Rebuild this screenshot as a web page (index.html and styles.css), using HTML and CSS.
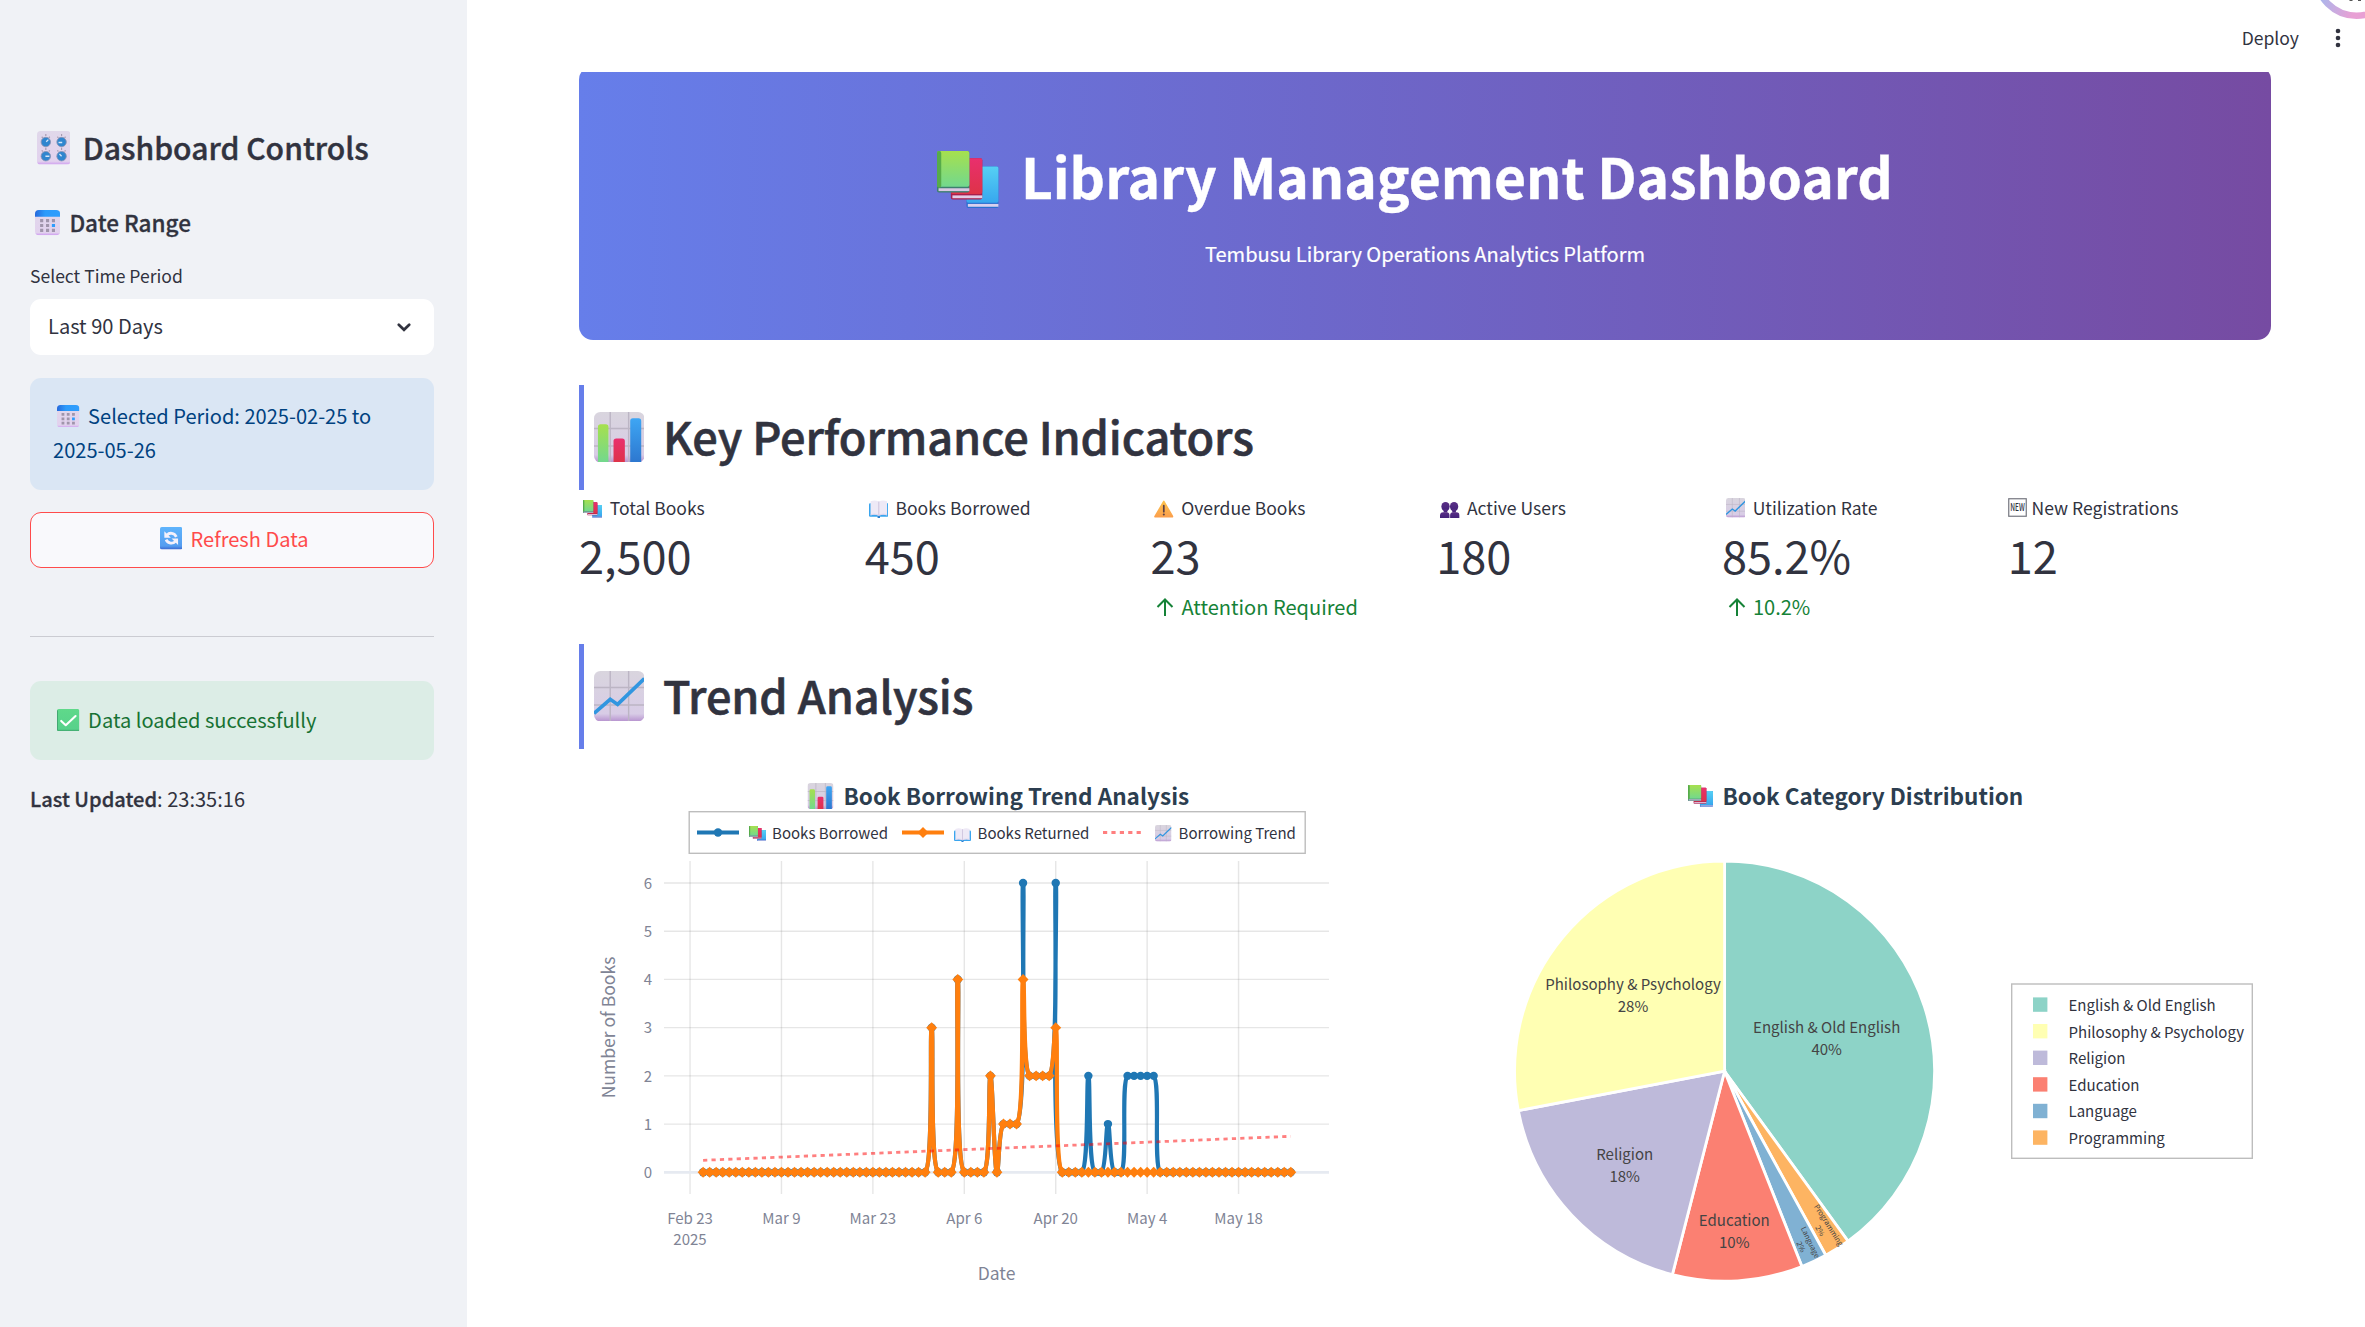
FILE: index.html
```html
<!DOCTYPE html>
<html lang="en">
<head>
<meta charset="utf-8">
<title>Library Management Dashboard</title>
<link rel="stylesheet" href="styles.css">
</head>
<body>
<svg class="defs" width="0" height="0" aria-hidden="true">
  <defs>
    <linearGradient id="g-tile" x1="0" y1="0" x2="0" y2="1"><stop offset="0" stop-color="#d9d5de"/><stop offset=".85" stop-color="#d8cce6"/><stop offset="1" stop-color="#b793cf"/></linearGradient>
    <linearGradient id="g-green" x1="0" y1="0" x2="0" y2="1"><stop offset="0" stop-color="#a6e04e"/><stop offset="1" stop-color="#72d88e"/></linearGradient>
    <linearGradient id="g-red" x1="0" y1="0" x2="0" y2="1"><stop offset="0" stop-color="#e92f6e"/><stop offset="1" stop-color="#de3348"/></linearGradient>
    <linearGradient id="g-sky" x1="0" y1="0" x2="0" y2="1"><stop offset="0" stop-color="#56d0f4"/><stop offset="1" stop-color="#37a7ee"/></linearGradient>
    <linearGradient id="g-blue" x1="0" y1="0" x2="0" y2="1"><stop offset="0" stop-color="#3ea6f4"/><stop offset="1" stop-color="#2d77cf"/></linearGradient>
    <linearGradient id="g-cal" x1="0" y1="0" x2="1" y2="0"><stop offset="0" stop-color="#2569dc"/><stop offset=".4" stop-color="#2b9bfb"/><stop offset="1" stop-color="#2f9dfd"/></linearGradient>
    <linearGradient id="g-page" x1="0" y1="0" x2="0" y2="1"><stop offset="0" stop-color="#e0d8ea"/><stop offset=".9" stop-color="#e2d2ee"/><stop offset="1" stop-color="#cf9df0"/></linearGradient>
    <linearGradient id="g-refresh" x1="0" y1="0" x2="0" y2="1"><stop offset="0" stop-color="#5fb4fc"/><stop offset=".85" stop-color="#559df0"/><stop offset="1" stop-color="#3a67cf"/></linearGradient>
    <linearGradient id="g-check" x1="0" y1="0" x2="0" y2="1"><stop offset="0" stop-color="#5fd98a"/><stop offset=".9" stop-color="#57d18b"/><stop offset="1" stop-color="#3a9c66"/></linearGradient>
    <linearGradient id="g-warn" x1="0" y1="0" x2="0" y2="1"><stop offset="0" stop-color="#fdc24c"/><stop offset="1" stop-color="#fba04c"/></linearGradient>
    <linearGradient id="g-user" x1="0" y1="0" x2="0" y2="1"><stop offset="0" stop-color="#5a2f86"/><stop offset="1" stop-color="#43217a"/></linearGradient>
    <linearGradient id="g-ring" gradientUnits="userSpaceOnUse" x1="4" y1="0" x2="38" y2="14"><stop offset="0" stop-color="#a9b6ec"/><stop offset="1" stop-color="#e8a0d4"/></linearGradient>

    <symbol id="i-knobs" viewBox="0 0 32 32">
      <rect width="32" height="32" rx="3.5" fill="url(#g-page)"/>
      <g fill="none" stroke="#a79bb0" stroke-width="1.1">
        <path d="M4.500 5.500l1 1M8.400 2.800v2M12.200 5.500l-1 1M19.400 5.500l1 1M23.400 2.800v2M27.200 5.500l-1 1M4.500 18.500l1 1M8.400 16v2M12.200 18.500l-1 1M19.400 18.500l1 1M23.400 16v2M27.200 18.500l-1 1"/>
      </g>
      <g fill="#2f86cf" stroke="#8a93b4" stroke-width=".8"><circle cx="8.400" cy="10.500" r="4.500"/><circle cx="23.400" cy="10.500" r="4.500"/><circle cx="8.400" cy="24" r="4.500"/><circle cx="23.400" cy="24" r="4.500"/></g>
      <path d="M8.800 10.200l2-2M20.500 11h3.500M8 24h3.800M23.400 24l-2-2" stroke="#d5e6f8" stroke-width="1.300" fill="none"/>
    </symbol>
    <symbol id="i-calendar" viewBox="0 0 32 32">
      <rect width="32" height="32" rx="5" fill="url(#g-page)"/>
      <path d="M0 8.500V5a5 5 0 0 1 5-5h22a5 5 0 0 1 5 5v3.500z" fill="url(#g-cal)"/>
      <g fill="#a095ab"><path d="M6.500 11.500h4v4h-4zM14 11.500h4v4h-4zM21.500 11.500h4v4h-4zM6.500 17.800h4v4h-4zM14 17.800h4v4h-4zM6.500 24h4v4h-4zM14 24h4v4h-4zM21.500 24h4v4h-4z"/></g>
      <path d="M21.500 17.800h4v4h-4z" fill="#2f9dfd"/>
    </symbol>
    <symbol id="i-refresh" viewBox="0 0 32 32">
      <rect width="32" height="32" rx="2.500" fill="url(#g-refresh)"/>
      <path d="M10 11.500C13.500 7.500 20.500 8 23.300 14M22 20.500C18.500 24.500 11.500 24 8.700 18" fill="none" stroke="#f4f1fb" stroke-width="4"/>
      <path d="M6.200 6.200v9.300h9.300zM25.800 25.800v-9.300h-9.300z" fill="#f4f1fb"/>
    </symbol>
    <symbol id="i-check" viewBox="0 0 32 32">
      <rect width="32" height="32" rx="2.500" fill="url(#g-check)"/>
      <path d="M.7 2v28" stroke="#43a572" stroke-width="1.400"/>
      <path d="M6 17l6.500 6.200L26.500 10" fill="none" stroke="#fff" stroke-width="3" stroke-linecap="round" stroke-linejoin="round"/>
    </symbol>
    <symbol id="i-books" viewBox="0 0 32 28" preserveAspectRatio="none">
      <rect x="15.300" y="7.600" width="16.700" height="20.400" rx="1" fill="#2b6fd0"/><rect x="15.300" y="7.600" width="16.700" height="17.800" rx="1" fill="url(#g-sky)"/><rect x="16" y="26" width="16" height="1.400" fill="#d9d0ee"/>
      <rect x="7.200" y="3.500" width="16.300" height="20.300" rx="1" fill="#a81f4e"/><rect x="7.200" y="3.500" width="16.300" height="17.600" rx="1" fill="url(#g-red)"/><rect x="8" y="21.800" width="15.500" height="1.400" fill="#e2cce6"/>
      <rect width="16.800" height="20.400" rx="1" fill="#3d7f70"/><rect width="16.800" height="17.600" rx="1" fill="url(#g-green)"/><rect width="2.200" height="18" rx="1" fill="#56ab4a"/><rect x=".8" y="18.300" width="16" height="1.400" fill="#d9c8e2"/>
    </symbol>
    <symbol id="i-openbook" viewBox="0 0 32 28" preserveAspectRatio="none">
      <rect y="5" width="32" height="21" rx="2" fill="#3aa5ee"/><path d="M14 25h4v3h-4z" fill="#2b7fd0"/>
      <path d="M2.500 2Q9.500-.8 16 2.500V24.500Q9 22 2.500 24zM29.500 2Q22.500-.8 16 2.500V24.500Q23 22 29.500 24z" fill="#eee9f6"/>
      <path d="M16 2.500v22" stroke="#c5b9d6" stroke-width="1.300"/><path d="M2.500 22.700Q9 21 16 23.300Q23 21 29.500 22.700" fill="none" stroke="#d6c8e6"/>
    </symbol>
    <symbol id="i-bars" viewBox="0 0 32 32">
      <rect width="32" height="32" rx="4" fill="url(#g-tile)"/>
      <path d="M10.300 0v32M22 0v32M0 10.500h32M0 21.600h32" stroke="#bcb5c4" stroke-width=".9"/>
      <path d="M2.500 32V9.500a1.700 1.700 0 0 1 1.700-1.700H7.500a1.700 1.700 0 0 1 1.700 1.700V32z" fill="url(#g-green)"/>
      <path d="M12.400 32V18.500a1.700 1.700 0 0 1 1.700-1.700h3.800a1.700 1.700 0 0 1 1.700 1.700V32z" fill="url(#g-red)"/>
      <path d="M23 32V5.700A1.700 1.700 0 0 1 24.700 4h3.600A1.700 1.700 0 0 1 30 5.700V32z" fill="url(#g-blue)"/>
    </symbol>
    <symbol id="i-trend" viewBox="0 0 32 32">
      <rect width="32" height="32" rx="4" fill="url(#g-tile)"/>
      <path d="M10.300 0v32M22 0v32M0 10.500h32M0 21.600h32" stroke="#bcb5c4" stroke-width=".9"/>
      <path d="M0 27L10.300 18L15 21.200L32 4.800" fill="none" stroke="#3196e0" stroke-width="2.300"/>
    </symbol>
    <symbol id="i-warning" viewBox="0 0 32 28">
      <path d="M16 1.500L30.500 26.500H1.500z" fill="url(#g-warn)" stroke="url(#g-warn)" stroke-width="2.500" stroke-linejoin="round"/>
      <path d="M16 8.500v10" stroke="#5b3f45" stroke-width="2.800" stroke-linecap="round"/><circle cx="16" cy="23" r="1.700" fill="#5b3f45"/>
    </symbol>
    <symbol id="i-users" viewBox="0 0 32 26" preserveAspectRatio="none">
      <g fill="url(#g-user)"><ellipse cx="9" cy="7.500" rx="6.800" ry="7.500"/><ellipse cx="23" cy="7.500" rx="6.800" ry="7.500"/><path d="M6 12h6v5H6zM20 12h6v5h-6z"/><path d="M0 26v-4q0-5.500 5.500-5.500h5q5 0 5 5V26zM16.500 26v-4.500q0-5 5-5h5q5.500 0 5.500 5.500v4z"/></g>
    </symbol>
    <symbol id="i-new" viewBox="0 0 19 19">
      <rect x=".75" y=".75" width="17.500" height="17.500" fill="#fff" stroke="#74767f" stroke-width="1.200"/>
      <text x="9.500" y="13" text-anchor="middle" font-size="9.800" font-weight="500" fill="#31333f" textLength="14.500" lengthAdjust="spacingAndGlyphs">NEW</text>
    </symbol>
    <symbol id="i-up" viewBox="0 0 18 18"><path d="M9 18V1.500M1.500 9L9 1.500L16.500 9" fill="none" stroke="currentColor" stroke-width="2"/></symbol>
  </defs>
</svg>

<div class="app">
  <aside class="sidebar">
    <h2 class="sidebar-title"><svg class="emoji"><use href="#i-knobs"/></svg> Dashboard Controls</h2>
    <h3 class="sidebar-subtitle"><svg class="emoji"><use href="#i-calendar"/></svg> Date Range</h3>
    <label class="field-label">Select Time Period</label>
    <div class="select"><span>Last 90 Days</span>
      <svg class="chevron" viewBox="0 0 14 9"><path d="M1.800 1.800L7 6.800L12.200 1.800" fill="none" stroke="#31333f" stroke-width="2.700" stroke-linecap="round"/></svg>
    </div>
    <div class="alert alert-info"><svg class="emoji"><use href="#i-calendar"/></svg> Selected Period: 2025-02-25 to 2025-05-26</div>
    <button class="refresh"><svg class="emoji"><use href="#i-refresh"/></svg> Refresh Data</button>
    <hr class="rule">
    <div class="alert alert-success"><svg class="emoji"><use href="#i-check"/></svg> Data loaded successfully</div>
    <p class="updated"><strong>Last Updated</strong>: 23:35:16</p>
  </aside>

  <main class="main">
    <header class="toolbar">
      <span class="deploy">Deploy</span>
      <svg class="kebab" viewBox="0 0 6 20"><g fill="#31333f"><circle cx="3" cy="3" r="2.300"/><circle cx="3" cy="10" r="2.300"/><circle cx="3" cy="17" r="2.300"/></g></svg>
      <svg class="ring" viewBox="0 0 50 20"><circle cx="41.500" cy="-24.600" r="40.300" fill="#fff" stroke="url(#g-ring)" stroke-width="6.600"/><path d="M34.500 0h3v1h-3zM43 0h3v1h-3z" fill="#555"/></svg>
    </header>

    <section class="banner">
      <h1 class="banner-title"><svg class="emoji"><use href="#i-books"/></svg> Library Management Dashboard</h1>
      <p class="banner-text">Tembusu Library Operations Analytics Platform</p>
    </section>

    <h2 class="section-title"><svg class="emoji"><use href="#i-bars"/></svg> Key Performance Indicators</h2>
    <section class="metrics">
      <div class="metric"><div class="metric-label"><svg class="emoji low"><use href="#i-books"/></svg> Total Books</div><div class="metric-value">2,500</div></div>
      <div class="metric"><div class="metric-label"><svg class="emoji low"><use href="#i-openbook"/></svg> Books Borrowed</div><div class="metric-value">450</div></div>
      <div class="metric"><div class="metric-label"><svg class="emoji low"><use href="#i-warning"/></svg> Overdue Books</div><div class="metric-value">23</div><div class="metric-delta"><svg class="up"><use href="#i-up"/></svg>Attention Required</div></div>
      <div class="metric"><div class="metric-label"><svg class="emoji lower"><use href="#i-users"/></svg> Active Users</div><div class="metric-value">180</div></div>
      <div class="metric"><div class="metric-label"><svg class="emoji"><use href="#i-trend"/></svg> Utilization Rate</div><div class="metric-value">85.2%</div><div class="metric-delta"><svg class="up"><use href="#i-up"/></svg>10.2%</div></div>
      <div class="metric"><div class="metric-label"><svg class="glyph-new"><use href="#i-new"/></svg> New Registrations</div><div class="metric-value">12</div></div>
    </section>

    <h2 class="section-title trend-title"><svg class="emoji"><use href="#i-trend"/></svg> Trend Analysis</h2>
    <section class="charts">
      <svg class="chart" id="line-chart" viewBox="579 748 835 579">
        <use href="#i-bars" x="807.500" y="783" width="26" height="26"/>
        <text class="chart-title" x="843.500" y="805">Book Borrowing Trend Analysis</text>
        <g id="grid"></g>
        <text class="axis-title" x="996.500" y="1280">Date</text>
        <text class="axis-title" transform="translate(615.300 1027.500) rotate(-90)">Number of Books</text>
        <g id="series"></g>
        <rect class="legend-box" x="689.200" y="811.700" width="616" height="41.600"/>
        <path d="M697 832.500h42" stroke="#1f77b4" stroke-width="4.200"/><circle cx="718" cy="832.500" r="4.200" fill="#1f77b4"/>
        <use href="#i-books" x="749" y="826" width="17" height="15"/><text class="legend-text" x="772" y="839">Books Borrowed</text>
        <path d="M902 832.500h42" stroke="#ff7f0e" stroke-width="4.200"/><path d="M917.500 832.500l5.500-5.500 5.500 5.500-5.500 5.500z" fill="#ff7f0e"/>
        <use href="#i-openbook" x="954" y="828" width="17" height="14"/><text class="legend-text" x="977.500" y="839">Books Returned</text>
        <path d="M1103 832.500h42" stroke="red" stroke-opacity=".5" stroke-width="2.800" stroke-dasharray="4.200"/>
        <use href="#i-trend" x="1155" y="825" width="16.500" height="16.500"/><text class="legend-text" x="1178.500" y="839">Borrowing Trend</text>
      </svg>
      <svg class="chart" id="pie-chart" viewBox="1436 748 835 579">
        <use href="#i-books" x="1688" y="785" width="25" height="22"/>
        <text class="chart-title" x="1722.500" y="805">Book Category Distribution</text>
        <g id="slices"></g>
        <g class="slice-text">
          <text x="1826.700" y="1033.200">English &amp; Old English</text><text x="1826.700" y="1055">40%</text>
          <text x="1633" y="990.300">Philosophy &amp; Psychology</text><text x="1633" y="1012">28%</text>
          <text x="1624.700" y="1160.400">Religion</text><text x="1624.700" y="1182.200">18%</text>
          <text x="1734.300" y="1226.400">Education</text><text x="1734.300" y="1248.200">10%</text>
          <g class="tiny" transform="translate(1826.500 1226.500) rotate(57.600)"><text>Programming</text><text x="0" y="10.300">2%</text></g>
          <g class="tiny" transform="translate(1808 1243.500) rotate(64.800)"><text>Language</text><text x="0" y="10.300">2%</text></g>
        </g>
        <rect class="legend-box" x="2011.700" y="984" width="240.600" height="174.300"/>
        <g id="pie-legend"></g>
      </svg>
    </section>
  </main>
</div>
<script src="charts.js"></script>
</body>
</html>
```

FILE: styles.css
```css
* { box-sizing: border-box; }

body {
  margin: 0;
  background: #fff;
  color: #31333f;
  font-family: "Noto Sans CJK SC", "Noto Sans CJK JP", sans-serif;
  font-size: 20.06px;
}

h1, h2, h3, p { margin: 0; }

.defs { position: absolute; }

.app { display: flex; height: 1327px; overflow: hidden; }

.emoji {
  width: 1.117em;
  height: 1.117em;
  margin: 0 .19em 0 .22em;
  vertical-align: -.16em;
}

/* Sidebar */
.sidebar {
  width: 467px;
  flex: none;
  padding: 119px 33px 0 30px;
  background: #f0f2f6;
}

.sidebar-title { font-size: 30.1px; font-weight: 500; line-height: 56px; -webkit-text-stroke: .4px; }
.sidebar-subtitle { margin-top: 27px; font-size: 22.5px; font-weight: 500; line-height: 40px; -webkit-text-stroke: .3px; }
.field-label { display: block; margin-top: 20px; font-size: 17.55px; line-height: 28px; }

.select {
  display: flex;
  align-items: center;
  justify-content: space-between;
  height: 56px;
  margin-top: 9px;
  padding: 0 23px 3px 18px;
  border-radius: 11px;
  background: #fff;
}

.chevron { width: 14px; height: 9px; margin-top: 3px; }

.alert { padding: 21px 22px 0 23px; border-radius: 11px; line-height: 34.300px; }
.alert-info { height: 112px; margin-top: 23px; background: #dae6f4; color: #004280; }
.alert-success { height: 79px; padding-top: 22px; background: #dcede6; color: #177233; }

.refresh {
  display: block;
  width: 100%;
  height: 56px;
  margin-top: 22px;
  padding: 0 0 4px;
  border: 1px solid #ff4b4b;
  border-radius: 11px;
  background: #f9f9fc;
  color: #ff4b4b;
  font: inherit;
}

.rule { height: 1px; margin: 68px 0 44px; border: 0; background: #cbccd2; }
.updated { margin-top: 22px; line-height: 34px; }
.updated strong { font-weight: 500; -webkit-text-stroke: .3px; }

/* Main column */
.main { flex: 1; padding: 0 94px 0 112px; }

.toolbar {
  position: relative;
  z-index: 1;
  display: flex;
  justify-content: flex-end;
  align-items: center;
  height: 72px;
  margin-right: -94px;
  padding: 4px 24px 0 0;
  background: #fff;
}

.deploy { margin: -2px 36px 0 0; font-size: 17.55px; }
.kebab { width: 6px; height: 20px; }
.ring { position: absolute; top: 0; right: 0; width: 50px; height: 20px; }

.banner {
  height: 274px;
  margin-top: -6px;
  padding-top: 72px;
  border-radius: 14px;
  background: linear-gradient(90deg, #667eea 0%, #764ba2 100%);
  color: #fff;
  text-align: center;
}

.banner-title { padding-right: 33px; font-size: 55.2px; font-weight: 700; line-height: 74px; -webkit-text-stroke: .4px; }
.banner-title .emoji { height: 57px; margin: 0 9.500px 0 13px; vertical-align: -9px; }
.banner-text { margin-top: 25px; font-size: 20.06px; line-height: 34px; -webkit-text-stroke: .2px; }

.section-title {
  height: 105px;
  margin-top: 45px;
  border-left: 5px solid #667eea;
  font-size: 45.1px;
  font-weight: 500;
  letter-spacing: -.1px;
  line-height: 102px;
  -webkit-text-stroke: .6px;
}

.trend-title { margin-top: 20px; }

.metrics {
  display: grid;
  grid-template-columns: repeat(6, 1fr);
  gap: 22.400px;
  height: 134px;
  padding-top: 4px;
}

.metric-label { font-size: 17.55px; line-height: 27px; }
.metric-value { font-size: 45.1px; line-height: 67px; }
.metric-delta { display: flex; align-items: center; color: #158237; line-height: 38px; }
.metric-label .low { height: 18px; vertical-align: -3px; }
.metric-label .lower { height: 16px; vertical-align: -3px; }
.glyph-new { width: 19px; height: 19px; margin-right: 1px; vertical-align: -2px; }
.up { width: 18px; height: 18px; margin: 0 7px 0 6px; }

/* Charts */
.charts { display: grid; grid-template-columns: 1fr 1fr; gap: 22px; margin-top: -1px; }
.chart { display: block; width: 835px; height: 579px; }
.chart-title { font-size: 22.55px; font-weight: 700; fill: #2c3e50; }
.legend-text { font-size: 15.04px; fill: #31333f; }
.legend-box { fill: #fff; stroke: #bdbdbd; stroke-width: 1.400; }
.axis-title { font-size: 17.55px; fill: #808495; text-anchor: middle; }
.tick { font-size: 15.04px; fill: #808495; text-anchor: middle; }
.tick-y { text-anchor: end; }
.grid-line { stroke: rgba(128, 128, 128, .2); stroke-width: 1.400; }
.zero-line { stroke: #e6eaf1; stroke-width: 2.800; }
.slice-text { font-size: 15.04px; fill: #444; text-anchor: middle; }
.tiny { font-size: 7.400px; }
```

FILE: charts.js
```js
const NS = 'http://www.w3.org/2000/svg';

function add(parent, tag, attrs, text) {
  const el = document.createElementNS(NS, tag);
  for (const key in attrs) el.setAttribute(key, attrs[key]);
  if (text) el.textContent = text;
  parent.appendChild(el);
  return el;
}

/* Line chart scales: day 0 is Feb 25, the axis starts on Feb 23 */
const dayX = day => 703.1 + day * 6.53;
const valueY = value => 1172.3 - value * 48.22;

const grid = document.getElementById('grid');
['Feb 23', 'Mar 9', 'Mar 23', 'Apr 6', 'Apr 20', 'May 4', 'May 18'].forEach((label, i) => {
  const x = dayX(i * 14 - 2);
  add(grid, 'path', { class: 'grid-line', d: `M${x} 861V1194` });
  add(grid, 'text', { class: 'tick', x, y: 1224 }, label);
});
add(grid, 'text', { class: 'tick', x: dayX(-2), y: 1245.3 }, '2025');
for (let v = 0; v <= 6; v++) {
  add(grid, 'path', { class: v ? 'grid-line' : 'zero-line', d: `M664 ${valueY(v)}H1329` });
  add(grid, 'text', { class: 'tick tick-y', x: 652, y: valueY(v) + 5.8 }, String(v));
}

const returned = new Array(91).fill(0);
Object.assign(returned, { 35: 3, 39: 4, 44: 2, 46: 1, 47: 1, 48: 1, 49: 4, 50: 2, 51: 2, 52: 2, 53: 2, 54: 3 });
const borrowed = returned.slice();
Object.assign(borrowed, { 49: 6, 54: 6, 59: 2, 62: 1, 65: 2, 66: 2, 67: 2, 68: 2, 69: 2 });

/* Centripetal Catmull-Rom control points */
function tangent(prev, cur, next) {
  const d1x = prev[0] - cur[0], d1y = prev[1] - cur[1];
  const d2x = next[0] - cur[0], d2y = next[1] - cur[1];
  const a = Math.pow(d1x * d1x + d1y * d1y, 0.25);
  const b = Math.pow(d2x * d2x + d2y * d2y, 0.25);
  const nx = b * b * d1x - a * a * d2x;
  const ny = b * b * d1y - a * a * d2y;
  const da = 3 * b * (a + b), db = 3 * a * (a + b);
  return [[cur[0] + nx / da, cur[1] + ny / da], [cur[0] - nx / db, cur[1] - ny / db]];
}

function spline(pts) {
  const t = [];
  for (let i = 1; i < pts.length - 1; i++) t.push(tangent(pts[i - 1], pts[i], pts[i + 1]));
  let d = `M${pts[0]}Q${t[0][0]} ${pts[1]}`;
  for (let i = 2; i < pts.length - 1; i++) d += `C${t[i - 2][1]} ${t[i - 1][0]} ${pts[i]}`;
  return d + `Q${t[pts.length - 3][1]} ${pts[pts.length - 1]}`;
}

const series = document.getElementById('series');
function drawSeries(values, color, marker) {
  const pts = values.map((v, i) => [dayX(i), valueY(v)]);
  add(series, 'path', { d: spline(pts), fill: 'none', stroke: color, 'stroke-width': 4.2 });
  pts.forEach(([x, y]) => add(series, 'path', { d: marker(x, y), fill: color }));
}
drawSeries(borrowed, '#1f77b4', (x, y) => `M${x - 4.2} ${y}a4.2 4.2 0 1 0 8.4 0a4.2 4.2 0 1 0 -8.4 0`);
drawSeries(returned, '#ff7f0e', (x, y) => `M${x - 5.46} ${y}l5.46 -5.46l5.46 5.46l-5.46 5.46z`);
add(series, 'path', { d: `M${dayX(0)} 1160.300L${dayX(90)} 1136.300`, stroke: 'red', 'stroke-opacity': 0.5, 'stroke-width': 2.8, 'stroke-dasharray': 4.2 });

/* Pie chart: clockwise from the top */
const slices = [['#8dd3c7', 40], ['#fdb462', 2], ['#80b1d3', 2], ['#fb8072', 10], ['#bebada', 18], ['#ffffb3', 28]];
const cx = 1724.6, cy = 1071.2, r = 210;
const rim = share => {
  const a = share / 50 * Math.PI;
  return `${cx + r * Math.sin(a)} ${cy - r * Math.cos(a)}`;
};
let sum = 0;
slices.forEach(([color, share]) => {
  add(document.getElementById('slices'), 'path', {
    d: `M${cx} ${cy}L${rim(sum)}A${r} ${r} 0 0 1 ${rim(sum + share)}Z`,
    fill: color, stroke: '#fff', 'stroke-width': 2.8
  });
  sum += share;
});

[['English & Old English', '#8dd3c7'], ['Philosophy & Psychology', '#ffffb3'], ['Religion', '#bebada'],
  ['Education', '#fb8072'], ['Language', '#80b1d3'], ['Programming', '#fdb462']].forEach(([label, color], i) => {
  const y = 1004.6 + i * 26.6;
  const legend = document.getElementById('pie-legend');
  add(legend, 'rect', { x: 2033, y: y - 7.2, width: 14.4, height: 14.4, fill: color });
  add(legend, 'text', { class: 'legend-text', x: 2068.5, y: y + 6.3 }, label);
});
```
